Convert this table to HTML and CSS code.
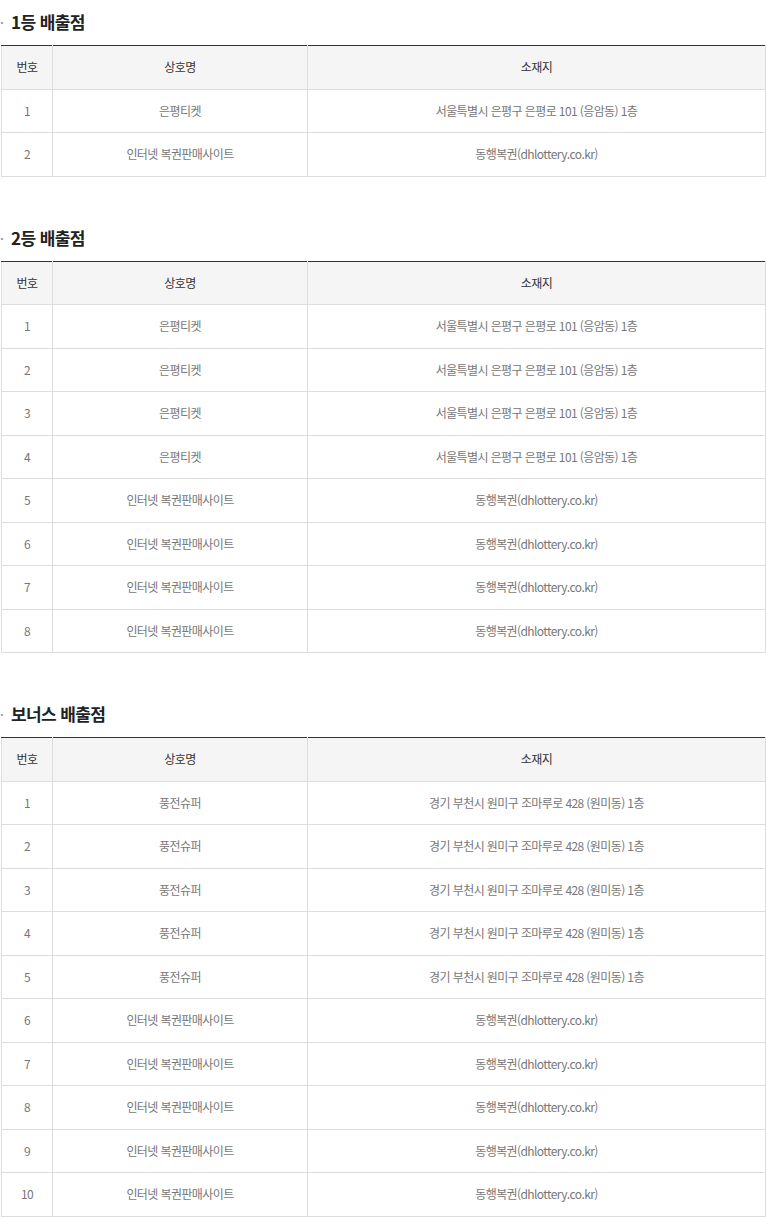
FILE: index.html
```html
<!DOCTYPE html>
<html lang="ko">
<head>
<meta charset="utf-8">
<link rel="stylesheet" href="styles.css">
</head>
<body>
<div class="wrap">
  <section class="sec">
    <h3 class="tit"><span class="dot">·</span>1등 배출점</h3>
    <table class="tbl">
      <colgroup><col class="c1"><col class="c2"><col class="c3"></colgroup>
      <thead><tr><th>번호</th><th>상호명</th><th>소재지</th></tr></thead>
      <tbody>
        <tr><td>1</td><td>은평티켓</td><td>서울특별시 은평구 은평로 101 (응암동) 1층</td></tr>
        <tr><td>2</td><td>인터넷 복권판매사이트</td><td>동행복권(dhlottery.co.kr)</td></tr>
      </tbody>
    </table>
  </section>
  <section class="sec">
    <h3 class="tit"><span class="dot">·</span>2등 배출점</h3>
    <table class="tbl">
      <colgroup><col class="c1"><col class="c2"><col class="c3"></colgroup>
      <thead><tr><th>번호</th><th>상호명</th><th>소재지</th></tr></thead>
      <tbody>
        <tr><td>1</td><td>은평티켓</td><td>서울특별시 은평구 은평로 101 (응암동) 1층</td></tr>
        <tr><td>2</td><td>은평티켓</td><td>서울특별시 은평구 은평로 101 (응암동) 1층</td></tr>
        <tr><td>3</td><td>은평티켓</td><td>서울특별시 은평구 은평로 101 (응암동) 1층</td></tr>
        <tr><td>4</td><td>은평티켓</td><td>서울특별시 은평구 은평로 101 (응암동) 1층</td></tr>
        <tr><td>5</td><td>인터넷 복권판매사이트</td><td>동행복권(dhlottery.co.kr)</td></tr>
        <tr><td>6</td><td>인터넷 복권판매사이트</td><td>동행복권(dhlottery.co.kr)</td></tr>
        <tr><td>7</td><td>인터넷 복권판매사이트</td><td>동행복권(dhlottery.co.kr)</td></tr>
        <tr><td>8</td><td>인터넷 복권판매사이트</td><td>동행복권(dhlottery.co.kr)</td></tr>
      </tbody>
    </table>
  </section>
  <section class="sec">
    <h3 class="tit"><span class="dot">·</span>보너스 배출점</h3>
    <table class="tbl">
      <colgroup><col class="c1"><col class="c2"><col class="c3"></colgroup>
      <thead><tr><th>번호</th><th>상호명</th><th>소재지</th></tr></thead>
      <tbody>
        <tr><td>1</td><td>풍전슈퍼</td><td>경기 부천시 원미구 조마루로 428 (원미동) 1층</td></tr>
        <tr><td>2</td><td>풍전슈퍼</td><td>경기 부천시 원미구 조마루로 428 (원미동) 1층</td></tr>
        <tr><td>3</td><td>풍전슈퍼</td><td>경기 부천시 원미구 조마루로 428 (원미동) 1층</td></tr>
        <tr><td>4</td><td>풍전슈퍼</td><td>경기 부천시 원미구 조마루로 428 (원미동) 1층</td></tr>
        <tr><td>5</td><td>풍전슈퍼</td><td>경기 부천시 원미구 조마루로 428 (원미동) 1층</td></tr>
        <tr><td>6</td><td>인터넷 복권판매사이트</td><td>동행복권(dhlottery.co.kr)</td></tr>
        <tr><td>7</td><td>인터넷 복권판매사이트</td><td>동행복권(dhlottery.co.kr)</td></tr>
        <tr><td>8</td><td>인터넷 복권판매사이트</td><td>동행복권(dhlottery.co.kr)</td></tr>
        <tr><td>9</td><td>인터넷 복권판매사이트</td><td>동행복권(dhlottery.co.kr)</td></tr>
        <tr><td>10</td><td>인터넷 복권판매사이트</td><td>동행복권(dhlottery.co.kr)</td></tr>
      </tbody>
    </table>
  </section>
</div>
</body>
</html>
```
FILE: styles.css
```css
html, body {
  margin: 0;
  padding: 0;
  background: #fff;
}
body {
  font-family: "Noto Sans CJK KR", "Noto Sans", sans-serif;
  color: #666;
}
.wrap {
  padding: 9px 1px 0 1px;
}
.sec + .sec {
  margin-top: 48px;
}
.tit {
  margin: 0 0 10px 0;
  height: 26px;
  line-height: 26px;
  font-size: 17px;
  font-weight: 700;
  color: #222;
  letter-spacing: -0.6px;
  display: flex;
  align-items: center;
}
.dot {
  display: inline-block;
  width: 11px;
  color: #888;
  font-weight: 400;
  font-size: 14px;
  margin-left: -1px;
}
.tbl {
  width: 764px;
  border-collapse: collapse;
  table-layout: fixed;
  border-top: 1px solid #333;
}
.c1 { width: 51px; }
.c2 { width: 255px; }
.c3 { width: 458px; }
.tbl th, .tbl td {
  border: 1px solid #ddd;
  height: 41px;
  padding: 0 0 1.5px 0;
  text-align: center;
  font-size: 12px;
  font-weight: 400;
  letter-spacing: -0.6px;
}
.tbl thead th {
  border-top: 1px solid #333;
  background: #f5f5f5;
  color: #333;
}
.tbl td {
  color: #777;
}
```
